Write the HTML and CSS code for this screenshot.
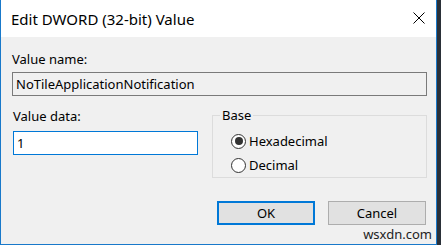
FILE: index.html
```html
<!DOCTYPE html>
<html>
<head>
<meta charset="utf-8">
<link rel="stylesheet" href="styles.css">
</head>
<body>

<div class="window">
  <div class="titlebar">
    <span class="title">Edit DWORD (32-bit) Value</span>
    <span class="close">
      <svg width="12" height="12" viewBox="0 0 12 12"><path d="M0.5 0.5 L11.5 11.5 M11.5 0.5 L0.5 11.5" stroke="#000" stroke-width="1" fill="none"/></svg>
    </span>
  </div>

  <div class="content">
    <div class="label">Value name:</div>
    <div class="field readonly">NoTileApplicationNotification</div>

    <div class="row">
      <div class="col-data">
        <div class="label">Value data:</div>
        <div class="field active">1</div>
      </div>
      <fieldset class="base">
        <legend>Base</legend>
        <div class="radio-row"><span class="radio checked"></span>Hexadecimal</div>
        <div class="radio-row"><span class="radio"></span>Decimal</div>
      </fieldset>
    </div>

    <div class="buttons">
      <button class="btn default">OK</button>
      <button class="btn">Cancel</button>
    </div>
  </div>

  <div class="watermark">wsxdn.com</div>
</div>

</body>
</html>
```

FILE: styles.css
```css
body {
  margin: 0;
  background-color: #2a3038;
  font-family: 'Noto Sans', 'Open Sans', sans-serif;
  color: #000;
}
.window {
  position: relative;
  width: 435px;
  height: 244px;
  background-color: #f0f0f0;
  border-left: 1px solid #1979ca;
  border-right: 1px solid #1979ca;
  border-bottom: 1px solid #1979ca;
}
.titlebar {
  height: 37px;
  background-color: #fff;
  display: flex;
  align-items: center;
  justify-content: space-between;
  padding: 0 11px 0 10px;
}
.title {
  font-size: 15px;
}
.close {
  display: flex;
  margin-top: -1px;
}
.content {
  padding: 13px 9px 0 11px;
}
.label {
  font-size: 13px;
  line-height: 18px;
}
.field {
  box-sizing: border-box;
  height: 24px;
  font-size: 13px;
  line-height: 22px;
  padding-left: 3px;
}
.field.readonly {
  margin-top: 4px;
  border: 1px solid #7a7a7a;
  background-color: #f0f0f0;
}
.field.active {
  margin-top: 6px;
  width: 185px;
  border: 1px solid #0078d7;
  background-color: #fff;
}
.row {
  display: flex;
  justify-content: space-between;
  margin-top: 11px;
}
.col-data {
  padding-left: 1px;
}
.base {
  box-sizing: border-box;
  width: 215px;
  height: 71px;
  margin: 0;
  padding: 0 0 0 18px;
  border: 1px solid #dcdcdc;
  font-size: 13px;
}
.base legend {
  padding: 0 2px;
  margin-left: -11px;
  line-height: 16px;
}
.radio-row {
  display: flex;
  align-items: center;
  height: 24px;
  margin-top: 6px;
}
.radio-row + .radio-row {
  margin-top: 0;
}
.radio {
  box-sizing: border-box;
  width: 15px;
  height: 15px;
  border: 1px solid #333;
  border-radius: 50%;
  background-color: #fff;
  margin-right: 3px;
  display: flex;
  align-items: center;
  justify-content: center;
}
.radio.checked::after {
  content: "";
  width: 8px;
  height: 8px;
  border-radius: 50%;
  background-color: #333;
}
.buttons {
  display: flex;
  justify-content: flex-end;
  gap: 13px;
  margin-top: 23px;
  padding-right: 1px;
}
.btn {
  box-sizing: border-box;
  width: 98px;
  height: 24px;
  font-family: 'Noto Sans', 'Open Sans', sans-serif;
  font-size: 13px;
  background-color: #e1e1e1;
  border: 1px solid #adadad;
  padding: 0;
}
.btn.default {
  border: 2px solid #0078d7;
}
.watermark {
  position: absolute;
  right: 4px;
  bottom: 2px;
  font-size: 13px;
  line-height: 15px;
  color: #222;
}
```
